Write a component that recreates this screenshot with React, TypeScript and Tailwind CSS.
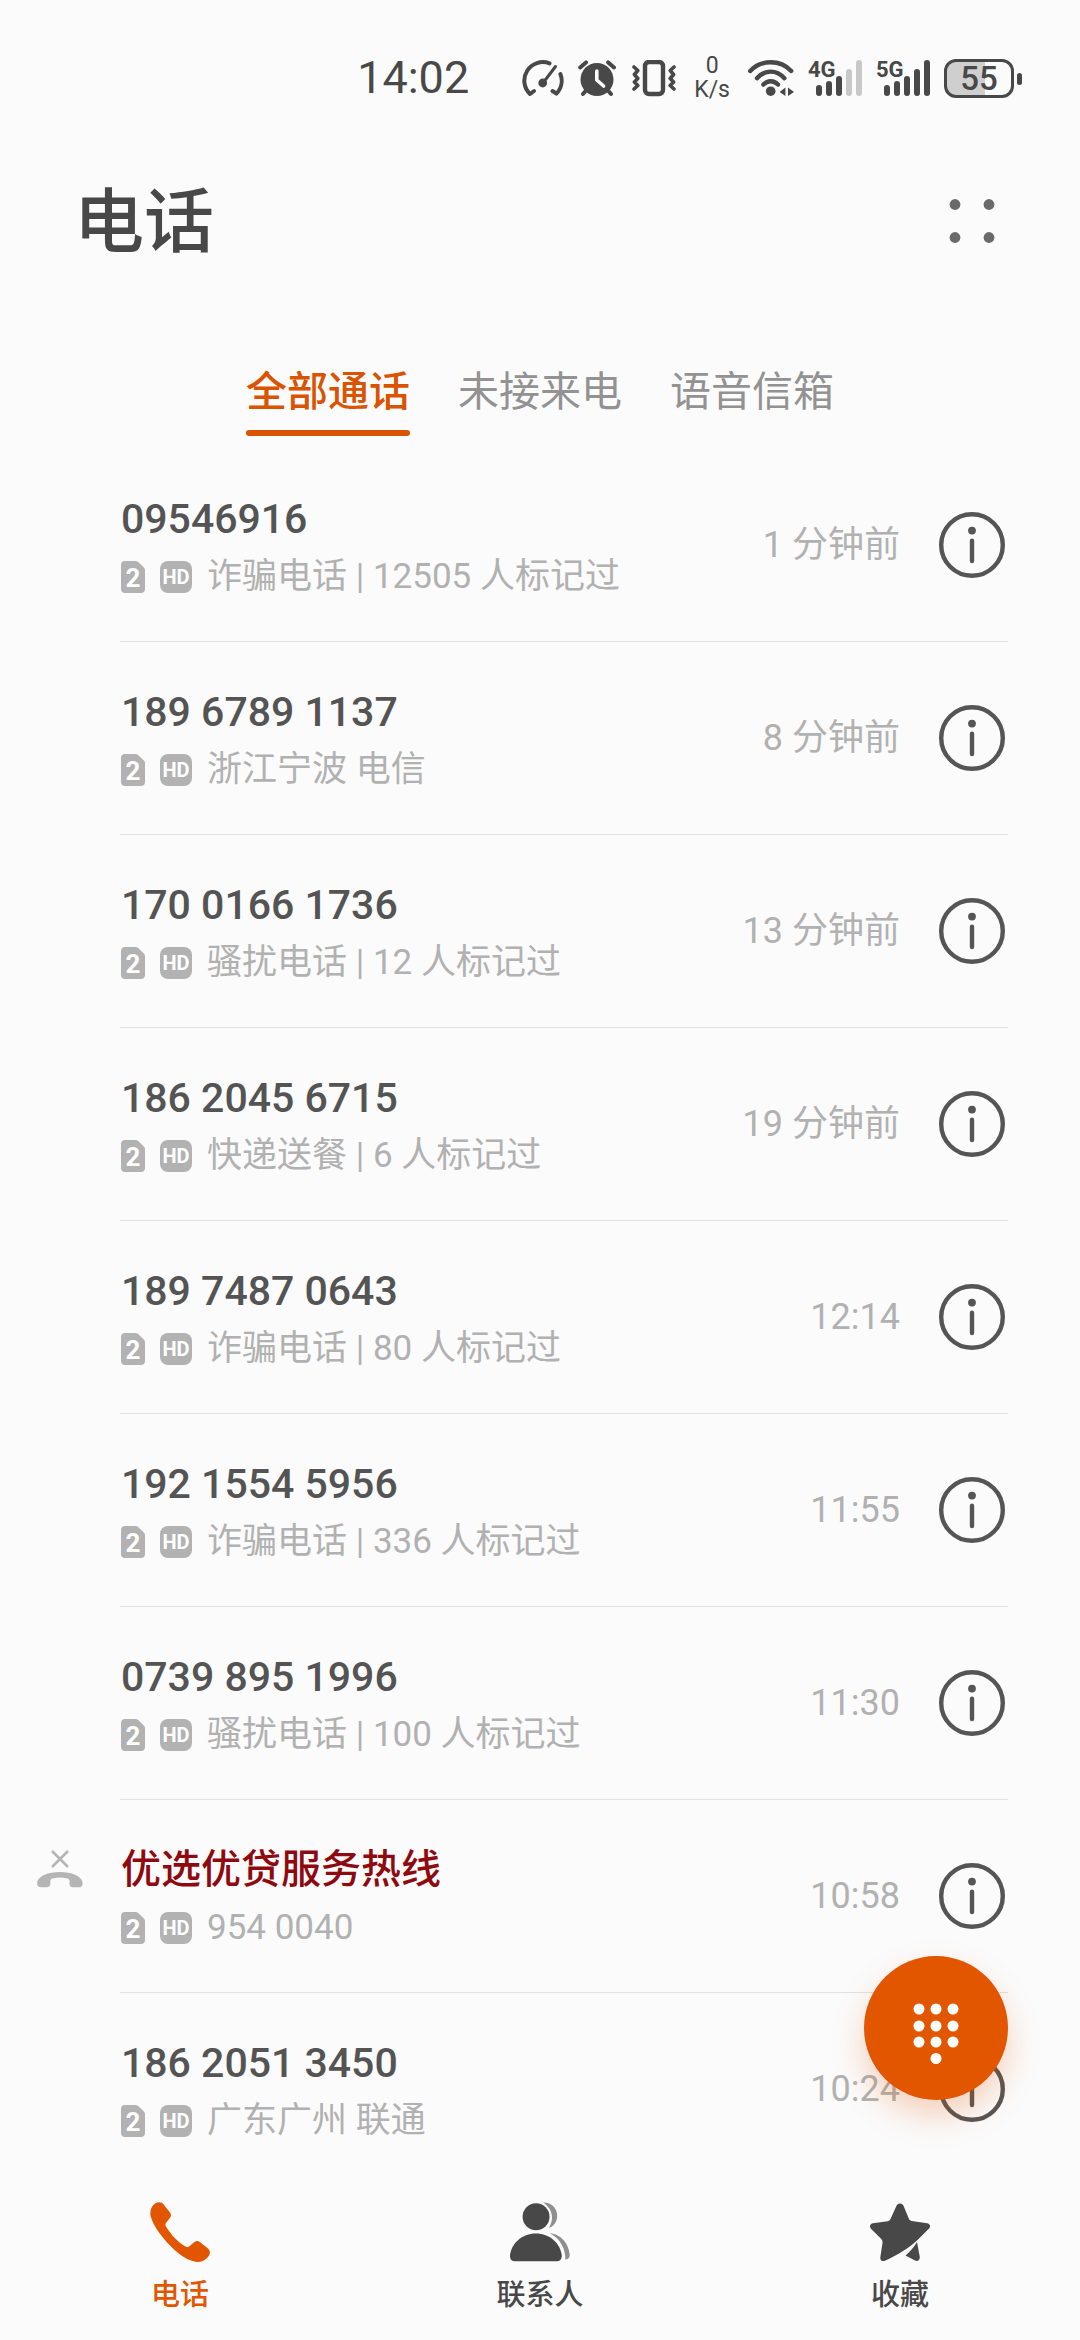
import { useState } from 'react';
import clsx from 'clsx';

interface Call {
  name: string;
  detail: string;
  time: string;
  missed?: boolean;
}

const calls: Call[] = [
  { name: '09546916', detail: '诈骗电话 | 12505 人标记过', time: '1 分钟前' },
  { name: '189 6789 1137', detail: '浙江宁波 电信', time: '8 分钟前' },
  { name: '170 0166 1736', detail: '骚扰电话 | 12 人标记过', time: '13 分钟前' },
  { name: '186 2045 6715', detail: '快递送餐 | 6 人标记过', time: '19 分钟前' },
  { name: '189 7487 0643', detail: '诈骗电话 | 80 人标记过', time: '12:14' },
  { name: '192 1554 5956', detail: '诈骗电话 | 336 人标记过', time: '11:55' },
  { name: '0739 895 1996', detail: '骚扰电话 | 100 人标记过', time: '11:30' },
  { name: '优选优贷服务热线', detail: '954 0040', time: '10:58', missed: true },
  { name: '186 2051 3450', detail: '广东广州 联通', time: '10:24' },
];

const tabs = ['全部通话', '未接来电', '语音信箱'];

function GaugeIcon() {
  return (
    <svg width="42" height="37" viewBox="0 0 42 37" fill="none" stroke="currentColor" strokeWidth="4" strokeLinecap="round" strokeLinejoin="round">
      <path d="M12 31L8 34A18.5 18.5 0 0 1 27.5 3.4" />
      <path d="M38.4 14A18.5 18.5 0 0 1 34.4 33.6L30.5 31" />
      <path d="M21 23L33.5 6.5" strokeWidth="3" />
      <circle cx="20.7" cy="23" r="4.4" fill="currentColor" stroke="none" />
    </svg>
  );
}

function AlarmIcon() {
  return (
    <svg width="40" height="37" viewBox="0 0 40 37" fill="none" stroke="currentColor" strokeWidth="4" strokeLinecap="round" strokeLinejoin="round">
      <circle cx="19" cy="19.5" r="16.5" fill="currentColor" stroke="none" />
      <path d="M2.2 7.4L8 2.4M30.2 2.4L36 7.4M8 30.5L5 34M30 30.5L33 34" />
      <path d="M18.8 11V20L25.6 26" stroke="#fbfbfb" strokeWidth="3.6" />
    </svg>
  );
}

function VibrateIcon() {
  return (
    <svg width="44" height="37" viewBox="0 0 44 37" fill="none" stroke="currentColor" strokeWidth="3.6" strokeLinecap="round" strokeLinejoin="round">
      <rect x="13" y="2" width="18" height="32" rx="4" strokeWidth="4.4" />
      <path d="M2 7L5.8 10.5L2.4 14.5L5.8 18.5L2.4 22L5.8 25.5L2 29" />
      <path d="M42 7L38.2 10.5L41.6 14.5L38.2 18.5L41.6 22L38.2 25.5L42 29" />
    </svg>
  );
}

function WifiIcon() {
  return (
    <svg width="46" height="37" viewBox="0 0 46 37" fill="none" stroke="currentColor" strokeWidth="4.4" strokeLinecap="round">
      <path d="M2.2 11C13-.6 32.4-.6 43.2 11" />
      <path d="M9 18.2C17 9.4 28.4 9.4 36.4 18.2" />
      <path d="M15.4 24.6C19.6 20.2 25.8 20.2 30 24.6" />
      <circle cx="22.7" cy="31.2" r="4.8" fill="currentColor" stroke="none" />
      <path d="M37.4 27.5V36L31.6 32ZM40 27.5V36L46 32Z" fill="currentColor" stroke="none" />
    </svg>
  );
}

function SignalIcon({ label, level }: { label: string; level: number }) {
  const tops = [25, 21, 16, 9, 0];
  return (
    <svg width="54" height="49" viewBox="0 -6 54 49" fill="currentColor">
      <text x="0" y="17" fontSize="22" fontWeight="700">{label}</text>
      {tops.map((top, i) => (
        <rect
          key={top}
          x={8 + i * 10}
          y={top}
          width="6"
          height={36 - top}
          rx="3"
          fill={i < level ? 'currentColor' : '#c8c8c8'}
        />
      ))}
    </svg>
  );
}

function BatteryIcon({ percent }: { percent: number }) {
  return (
    <svg width="78" height="39" viewBox="0 0 78 39">
      <path d="M12 1.5H41V37.5H12C6 37.5 1.5 33 1.5 27V12C1.5 6 6 1.5 12 1.5Z" fill="#cfcfcf" />
      <rect x="1.5" y="1.5" width="67" height="36" rx="10.5" fill="none" stroke="currentColor" strokeWidth="3" />
      <rect x="73" y="14" width="5" height="12" rx="2.5" fill="currentColor" />
      <text x="35" y="31" fontSize="33" fontWeight="500" textAnchor="middle" fill="currentColor">{percent}</text>
    </svg>
  );
}

function StatusBar() {
  return (
    <div className="flex h-[156px] items-center justify-end gap-[14px] pr-[58px] text-[#484848]">
      <span className="mr-[39px] text-[45px] leading-[54px]">14:02</span>
      <GaugeIcon />
      <AlarmIcon />
      <VibrateIcon />
      <span className="mx-1 flex flex-col items-center text-[23px] leading-[24px]">
        <span>0</span>
        <span>K/s</span>
      </span>
      <WifiIcon />
      <SignalIcon label="4G" level={3} />
      <SignalIcon label="5G" level={5} />
      <BatteryIcon percent={55} />
    </div>
  );
}

function SimBadge() {
  return (
    <svg width="24" height="32" viewBox="0 0 24 32">
      <path d="M4 0H14.5C15.6 0 16.4.4 17.2 1.1L22.6 6.2C23.6 7.2 24 8 24 9.4V28C24 30.4 22.4 32 20 32H4C1.6 32 0 30.4 0 28V4C0 1.6 1.6 0 4 0Z" fill="#b2b2b2" />
      <text x="12" y="26" fontSize="26" fontWeight="700" textAnchor="middle" fill="#ffffff">2</text>
    </svg>
  );
}

function MissedIcon() {
  return (
    <svg width="46" height="38" viewBox="0 0 46 38" fill="#b5b5b5">
      <path d="M15 1L31 17M31 1L15 17" stroke="#b5b5b5" strokeWidth="2.6" />
      <path d="M.3 32C1.5 26 11 22 22.8 22S44.5 26 45.4 32C46 35.5 44.5 37.3 41.5 37.3H36C33.5 37.3 32.5 36 32.5 33.5V31C32.5 29.5 32 28.8 30.5 28.4C25 27.3 20.5 27.3 15.5 28.4C14 28.8 13.3 29.5 13.3 31V33.5C13.3 36 12 37.3 9.8 37.3H4C1.2 37.3-.4 35.5.3 32Z" />
    </svg>
  );
}

function InfoIcon() {
  return (
    <svg width="72" height="72" viewBox="0 0 72 72" fill="#555555">
      <circle cx="36" cy="36" r="30.8" fill="none" stroke="#555555" strokeWidth="4.4" />
      <circle cx="36" cy="21.6" r="3.9" />
      <rect x="33.8" y="29.6" width="4.4" height="24.6" rx="2.2" />
    </svg>
  );
}

function CallRow({ call, last }: { call: Call; last: boolean }) {
  return (
    <li className="flex">
      <div className="w-[120px] shrink-0 pt-[50px] pl-[37px]">{call.missed && <MissedIcon />}</div>
      <div
        className={clsx(
          'mr-[72px] flex flex-1 items-center border-[#e1e1e1] py-10',
          !last && 'border-b',
        )}
      >
        <div className="flex flex-1 flex-col gap-[10px] pt-[6px] pl-px">
          <div
            className={clsx(
              'leading-[48px] font-medium',
              call.missed ? 'text-[40px] text-[#8f0a10]' : 'text-[41px] text-[#545454]',
            )}
          >
            {call.name}
          </div>
          <div className="flex h-12 items-center text-[35px] leading-[50px] text-[#b1b1b1]">
            <SimBadge />
            <span className="mr-[15px] ml-[15px] flex size-8 items-center justify-center rounded-lg bg-[#b2b2b2] text-[20px] leading-none font-bold text-white">
              HD
            </span>
            <span>{call.detail}</span>
          </div>
        </div>
        <time className="mr-9 text-[36px] leading-[48px] text-[#b1b1b1]">{call.time}</time>
        <button type="button" aria-label="详情">
          <InfoIcon />
        </button>
      </div>
    </li>
  );
}

function PhoneIcon() {
  return (
    <svg width="60" height="60" viewBox="0 0 60 60" fill="currentColor">
      <path d="M9.3.3C11 .3 12.5 1 13.6 2.4L20 10.6C21.4 12.4 21.2 14.2 20 15.8L16 21C15.2 22.2 15.3 23.2 16 24.5C21 33 28 40 35.5 44.5C36.8 45.2 38 45.2 39 44.4L44.5 40C46.2 38.7 48 38.7 49.8 40L58 46.4C60.3 48.4 60.5 51 59 53.6C56 58.6 51 60.5 45.5 59.7C38 58.5 30 53.5 21 44.5C11 34.5 3 23 .6 14C-.6 8.5 2.5.3 9.3.3Z" />
    </svg>
  );
}

function ContactsIcon() {
  return (
    <svg width="60" height="60" viewBox="0 0 61 61" fill="currentColor">
      <circle cx="26.5" cy="15" r="13.7" />
      <path d="M0 54C1.5 42 12 32 26.3 32S51 42 52.6 54C53 58 51 60.3 47.5 60.3H5C1.6 60.3-.3 58 0 54Z" />
      <path d="M34 .6C42 .4 48 6.5 48 14C48 20 44.5 25 39.5 26.3C44.5 19 44.5 8 34 .6Z" fill="#8f8f8f" />
      <path d="M40.5 31.8C52 32.5 60 43 60.7 54C60.7 57 59 58.5 56.2 58.5C56.8 48 51 37 40.5 31.8Z" fill="#8f8f8f" />
    </svg>
  );
}

function StarIcon() {
  return (
    <svg width="60" height="60" viewBox="0 0 60 60" fill="currentColor">
      <path d="M30 1.5C31.8 1.5 33 2.5 33.6 4L39 17C39.5 18.2 40.5 18.8 41.8 19L57 21.2C60 21.7 61 24.4 59 26.5L47.5 38C38 47 27 53 15.5 58.6C12.7 59.9 10 58.6 10.3 55.4L12.5 41C12.7 39.5 12.3 38.2 11.3 37L1 26.8C-1 24.6 0 21.8 3 21.3L17.5 19.2C18.9 19 19.9 18.3 20.5 17L26.4 4C27 2.5 28.2 1.5 30 1.5Z" />
      <path d="M47 40L49.8 55C50.1 58 47.6 59.8 45 58.5L35.5 53.6C40 49.5 44 45 47 40Z" />
    </svg>
  );
}

const navItems = [
  { label: '电话', Icon: PhoneIcon },
  { label: '联系人', Icon: ContactsIcon },
  { label: '收藏', Icon: StarIcon },
];

function BottomNav() {
  return (
    <nav className="sticky bottom-0 mt-auto grid grid-cols-3 bg-[#fbfbfb] pt-[17px] pb-[25px]">
      {navItems.map(({ label, Icon }, i) => (
        <a
          key={label}
          href={`#${label}`}
          className={clsx(
            'flex flex-col items-center gap-[13px] text-[29px] leading-[40px] font-medium',
            i === 0 ? 'text-[#e25600]' : 'text-[#484848]',
          )}
        >
          <Icon />
          {label}
        </a>
      ))}
    </nav>
  );
}

function DialButton() {
  return (
    <button
      type="button"
      aria-label="拨号键盘"
      className="fixed right-[72px] bottom-[240px] flex size-36 items-center justify-center rounded-full bg-[#e25600] shadow-[0_16px_32px_rgba(226,86,0,0.25)]"
    >
      <svg width="60" height="72" viewBox="0 0 60 72" fill="#ffffff">
        {[17, 34, 50].map((y) => [13, 30, 47].map((x) => <circle key={`${x}-${y}`} cx={x} cy={y} r="5.5" />))}
        <circle cx="30" cy="66.5" r="5.5" />
      </svg>
    </button>
  );
}

export default function App() {
  const [active, setActive] = useState(0);

  return (
    <div className="flex min-h-screen flex-col bg-[#fbfbfb] font-['Roboto','Noto_Sans_CJK_SC',sans-serif]">
      <StatusBar />
      <header className="flex h-[124px] items-center justify-between pr-[72px] pl-[74px]">
        <h1 className="pt-[10px] text-[70px] leading-[80px] font-medium text-[#484848]">电话</h1>
        <button type="button" aria-label="更多">
          <svg width="72" height="72" viewBox="0 0 72 72" fill="#6a6a6a">
            <circle cx="19" cy="22.5" r="5.4" />
            <circle cx="53" cy="22.5" r="5.4" />
            <circle cx="19" cy="55.5" r="5.4" />
            <circle cx="53" cy="55.5" r="5.4" />
          </svg>
        </button>
      </header>
      <div role="tablist" className="mb-[13px] flex justify-center gap-12 pt-[82px]">
        {tabs.map((tab, i) => (
          <button
            key={tab}
            type="button"
            role="tab"
            aria-selected={i === active}
            onClick={() => setActive(i)}
            className={clsx(
              'flex flex-col gap-2 text-[41px] leading-[60px]',
              i === active ? 'font-medium text-[#d95300]' : 'text-[#929292]',
            )}
          >
            {tab}
            <span className={clsx('h-[6px] w-full rounded-full', i === active && 'bg-[#d95300]')} />
          </button>
        ))}
      </div>
      <ul>
        {calls.map((call, i) => (
          <CallRow key={call.name} call={call} last={i === calls.length - 1} />
        ))}
      </ul>
      <BottomNav />
      <DialButton />
    </div>
  );
}
